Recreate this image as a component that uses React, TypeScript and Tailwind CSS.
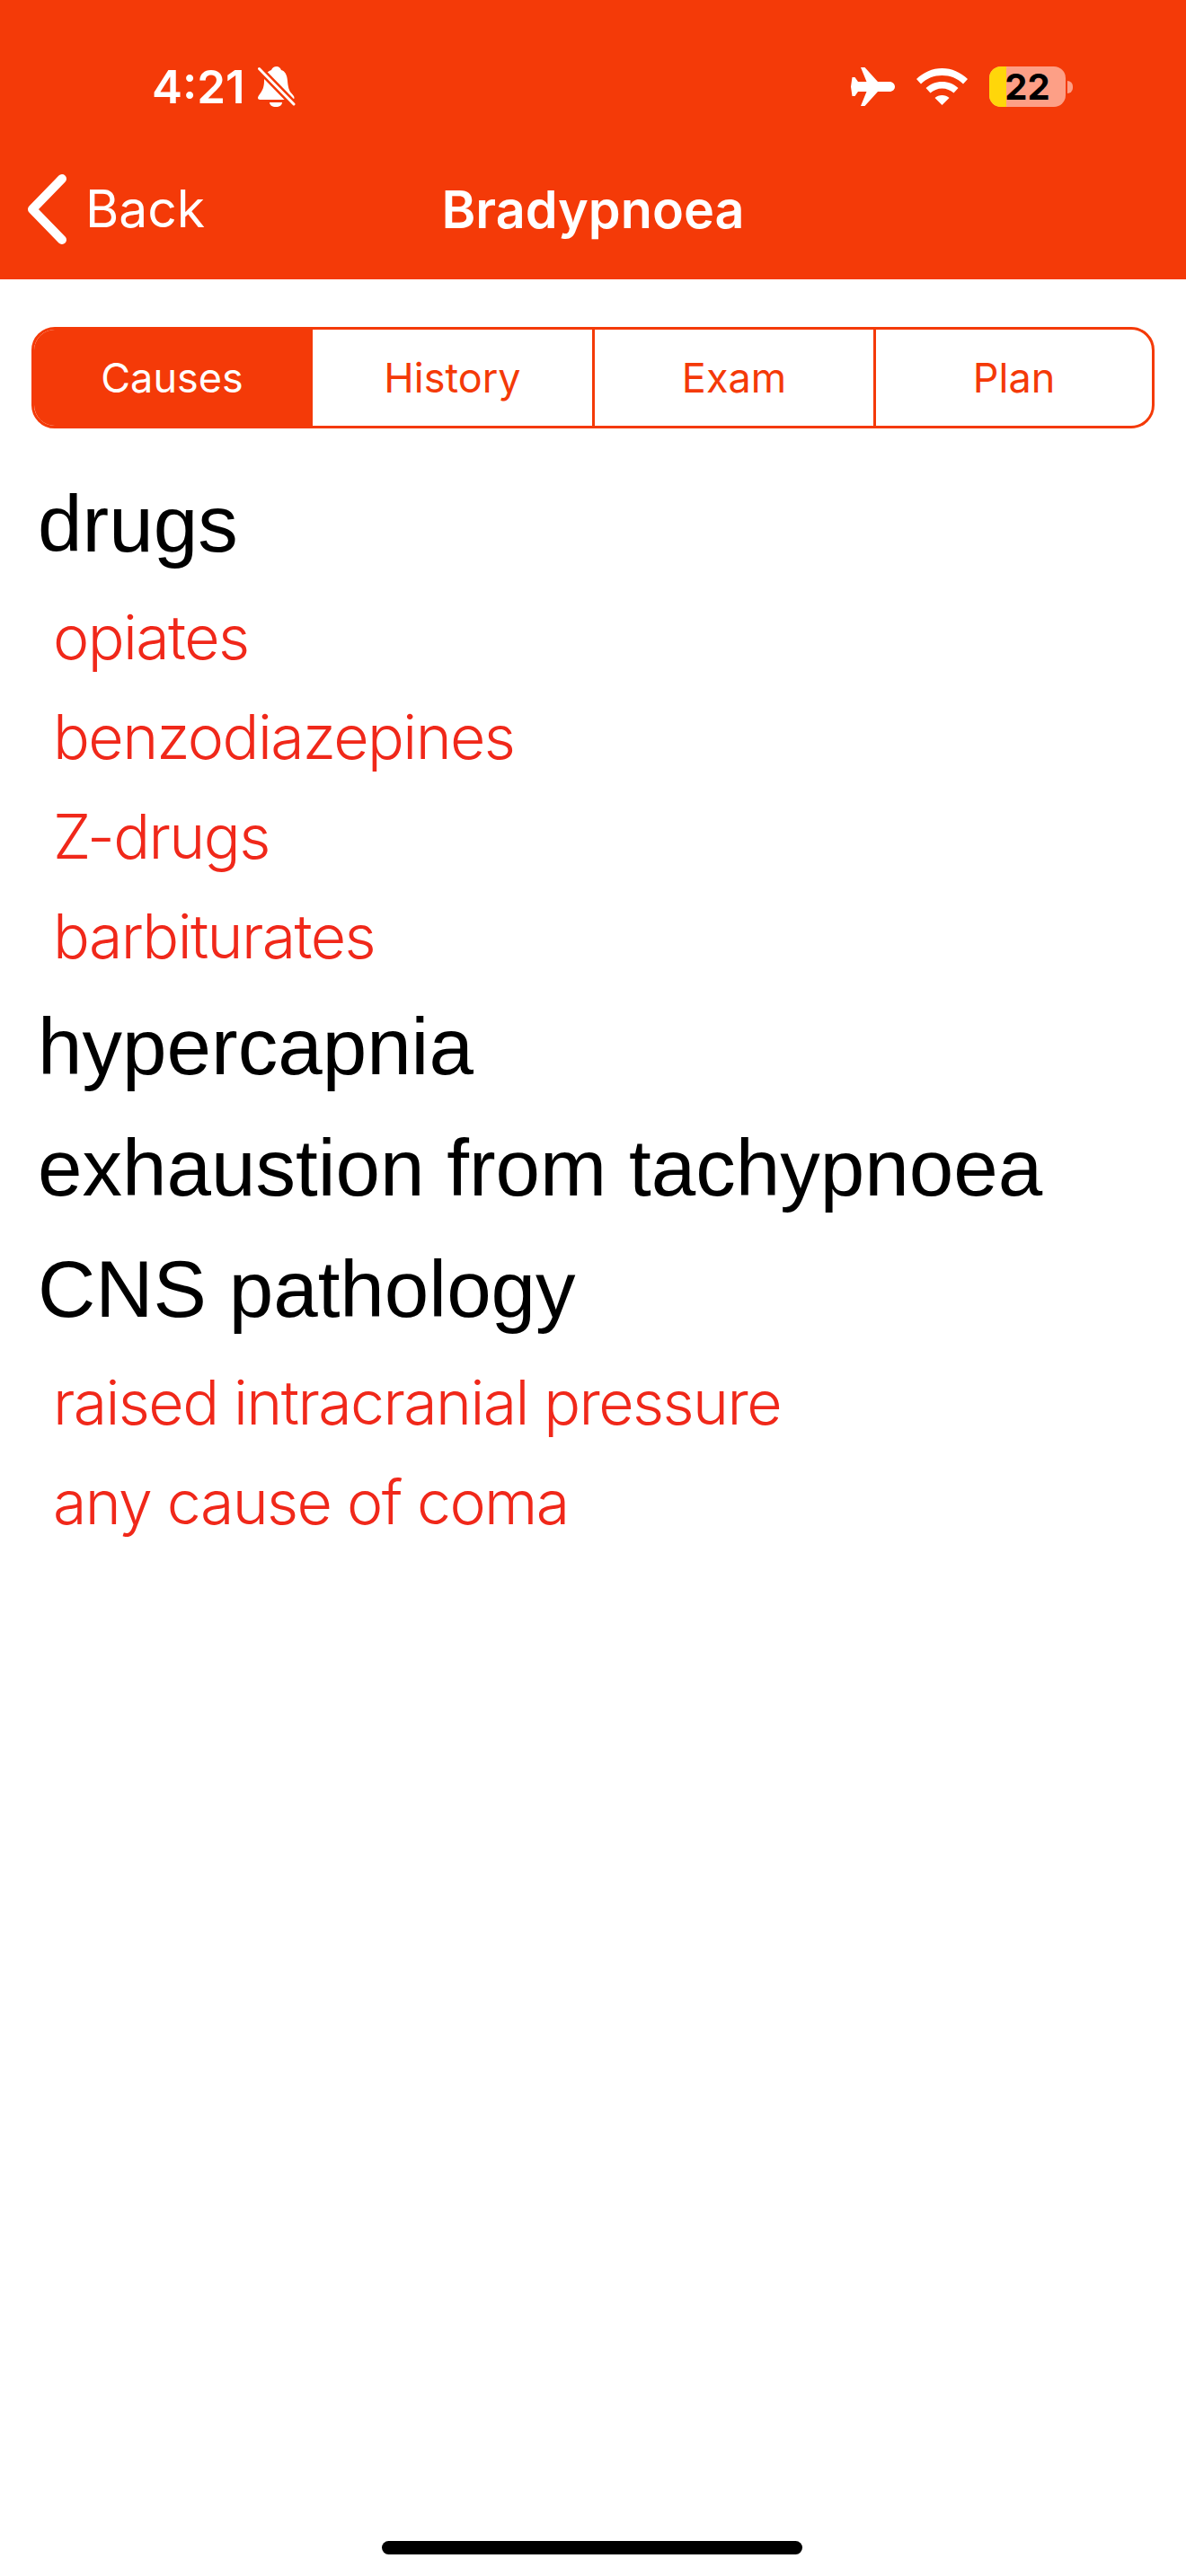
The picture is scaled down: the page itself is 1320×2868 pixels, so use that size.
const orange = 'bg-[#f43a08]';

const tabs = ['Causes', 'History', 'Exam', 'Plan'];

const causes = [
  { title: 'drugs', items: ['opiates', 'benzodiazepines', 'Z-drugs', 'barbiturates'] },
  { title: 'hypercapnia', items: [] },
  { title: 'exhaustion from tachypnoea', items: [] },
  { title: 'CNS pathology', items: ['raised intracranial pressure', 'any cause of coma'] },
];

function MutedBell() {
  return (
    <svg width="42" height="46" viewBox="0 0 42 46" fill="white">
      <path d="M21 0c-3 0-5 1.500-6 4-5 1.500-8 6-8 12 0 7-2 11-5 15-1.500 2-2 3-2 4 0 1 1 2 2.500 2H38c1.500 0 2.500-1 2.500-2 0-1.500-1-3-3-5-3-3-4-8-4.500-14-.5-7-3-11-7-12-1-2.500-3-4-5-4z" />
      <path d="M13 40h14c0 3-3 5-7 5s-7-2-7-5z" />
      <path d="M-1 0 42 44" stroke="#f43a08" strokeWidth="8" />
      <path d="M1.500 2.500 40 42" stroke="white" strokeWidth="3" strokeLinecap="round" />
    </svg>
  );
}

function PlaneIcon() {
  return (
    <svg width="49" height="43" viewBox="0 0 49 43" fill="white">
      <path d="M11 0h4.500L30 16h13c3.500 0 6 2.500 6 5.500S46.500 27 43 27H30L15.500 43H11l6.500-16H8l-3.500 5H1.500L0 21.500 1.500 11h3L8 16h9.500L11 0z" />
    </svg>
  );
}

function WifiIcon() {
  return (
    <svg width="57" height="41" viewBox="0 0 57 41" fill="white">
      <path d="M28.500 0c11 0 20.500 4.500 28.500 12l-5 5.500C45.500 11 37.500 8 28.500 8S11.500 11 5 17.500L0 12C8 4.500 17.500 0 28.500 0z" />
      <path d="M28.500 15c7 0 13 2.500 18 7l-5 5.500c-3.500-3-8-5-13-5s-9.500 2-13 5l-5-5.500c5-4.500 11-7 18-7z" />
      <path d="M28.500 30c3 0 6 1 8 3l-8 8-8-8c2-2 5-3 8-3z" />
    </svg>
  );
}

function Battery() {
  return (
    <div className="flex items-center gap-[2px]">
      <div className="relative h-[45px] w-[85px] rounded-[13px] bg-[#fd9f86]">
        <div className="h-full w-[19px] rounded-l-[13px] bg-[#ffd60a]" />
        <div className="absolute inset-0 text-center text-[40px] leading-[45px] font-bold text-black [font-family:Inter,sans-serif]">22</div>
      </div>
      <div className="h-[14px] w-[6px] rounded-r-full bg-[#fd9f86]" />
    </div>
  );
}

export default function App() {
  return (
    <div className="flex h-[2868px] w-[1320px] flex-col overflow-hidden bg-white [font-family:'Liberation_Sans',sans-serif]">
      <div className={`${orange} h-[311px] shrink-0`}>
        <div className="flex h-[130px] items-end justify-between pb-[3px] text-white">
          <div className="flex items-center pl-[169px] [font-family:Inter,sans-serif]">
            <span className="text-[51px] leading-[60px] font-semibold">4:21</span>
            <span className="ml-[14px]">
              <MutedBell />
            </span>
          </div>
          <div className="mb-[8px] flex items-center gap-[24px] pr-[126px]">
            <PlaneIcon />
            <WifiIcon />
            <Battery />
          </div>
        </div>
        <div className="relative mt-[38px] flex h-[130px] items-center text-white [font-family:Inter,sans-serif]">
          <svg className="ml-[28px]" width="50" height="80" viewBox="0 0 50 80" fill="none" stroke="white" strokeWidth="10" strokeLinecap="round" strokeLinejoin="round">
            <path d="M41 6 8 40l33 34" />
          </svg>
          <span className="ml-[17px] text-[57px] font-normal">Back</span>
          <h1 className="absolute inset-x-0 text-center text-[57.5px] font-semibold">Bradypnoea</h1>
        </div>
      </div>

      <div className="mx-[35px] mt-[53px] grid h-[113px] shrink-0 grid-cols-[307px_314px_313px_1fr] overflow-hidden rounded-[26px] border-[3px] border-[#f43a08] [font-family:Inter,sans-serif]">
        {tabs.map((t, i) => (
          <div
            key={t}
            className={
              i === 0
                ? `${orange} flex items-center justify-center text-[45px] text-white`
                : 'flex items-center justify-center border-l-[3px] border-[#f43a08] text-[45px] text-[#f43a08]'
            }
          >
            {t}
          </div>
        ))}
      </div>

      <div className="mt-[39px] pl-[42px]">
        {causes.map((c) => (
          <div key={c.title}>
            <div className="text-[89px] leading-[135px] text-black">{c.title}</div>
            {c.items.length > 0 && (
              <div className="pt-[3px]">
                {c.items.map((item) => (
                  <div key={item} className="pl-[17px] text-[68px] leading-[111px] font-light tracking-[-1.6px] text-[#f0281a] [font-family:Inter,sans-serif]">
                    {item}
                  </div>
                ))}
              </div>
            )}
          </div>
        ))}
      </div>

      <div className="mt-auto mb-[24px] ml-[425px] h-[15px] w-[468px] shrink-0 rounded-full bg-black" />
    </div>
  );
}
